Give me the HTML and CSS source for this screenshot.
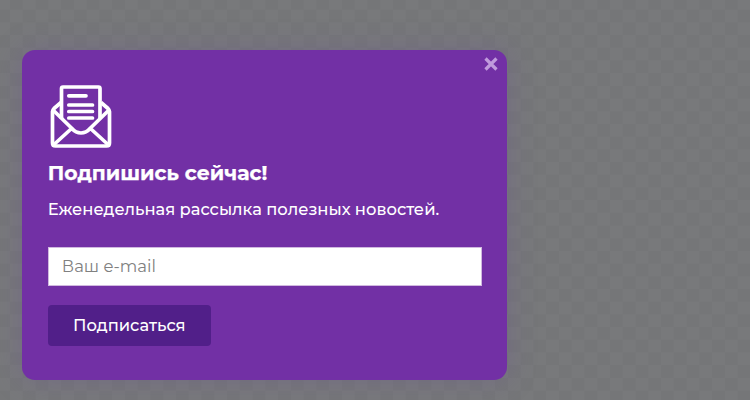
FILE: index.html
```
<!DOCTYPE html>
<html lang="ru">
<head>
<meta charset="utf-8">
<title>Подписка</title>
<link rel="stylesheet" href="styles.css">
</head>
<body>
<main class="popup">
  <button class="close" type="button" aria-label="Закрыть">
    <svg width="16" height="16" viewBox="0 0 16 16"><path d="M2.500 2.500L13.500 13.500M13.500 2.500L2.500 13.500"/></svg>
  </button>
  <svg class="mail" width="64" height="66" viewBox="0 0 64 66">
    <path d="M13.500 36V5.500Q13.500 4 15 4H50.500Q52 4 52 5.500V36"/>
    <path d="M13 19.500L6 25.500Q4.500 27 4.500 28.500V60Q4.500 63 7.500 63H58.500Q61.500 63 61.500 60V28.500Q61.500 27 60 25.500L53 19.500"/>
    <path d="M5 27L24 45.500C29 51.500 37 51.500 42 45.500L61 27M6 61.500L23 46M60 61.500L43 46"/>
    <path class="lines" d="M20.800 12.800H38M20.800 22H44.500M20.800 28.500H44.500M20.800 35H44.500"/>
  </svg>
  <h1 class="title">Подпишись сейчас!</h1>
  <p class="text">Еженедельная рассылка полезных новостей.</p>
  <form class="form">
    <input class="email" type="email" placeholder="Ваш e-mail">
    <button class="submit" type="button">Подписаться</button>
  </form>
</main>
</body>
</html>
```
FILE: styles.css
```
* { box-sizing: border-box; }
body {
  margin: 0;
  height: 400px;
  padding: 49.600px 0 0 21.800px;
  overflow: hidden;
  font-family: Montserrat, Inter, sans-serif;
  background: repeating-conic-gradient(#757678 0 25%, #78797b 0 50%) 10px 9.7px / 25.54px 25.4px;
}
.popup {
  position: relative;
  width: 485.700px;
  height: 330px;
  padding: 33px 26px 0;
  border-radius: 13px;
  background: #7230a5;
  color: #fff;
  box-shadow: 0 0 28px rgba(108, 84, 150, .38);
}
.close {
  position: absolute;
  top: 6.400px;
  right: 8.300px;
  width: 16px;
  height: 16px;
  padding: 0;
  border: 0;
  background: none;
}
.close svg { display: block; }
.close path { stroke: #c09bdc; stroke-width: 3.200; }
.mail { display: block; fill: none; stroke: #fff; stroke-width: 3.700; stroke-linejoin: round; }
.lines { stroke-linecap: round; }
.title {
  margin: 10px 0 0;
  font-size: 20.400px;
  line-height: 28px;
  font-weight: 700;
  white-space: nowrap;
  -webkit-text-stroke: .25px #fff;
}
.text {
  margin: 10px 0 0;
  font-size: 16.350px;
  line-height: 24px;
  font-weight: 500;
  white-space: nowrap;
}
.form {
  display: flex;
  flex-direction: column;
  align-items: flex-start;
  gap: 19px;
  margin-top: 26px;
}
.email {
  width: 434px;
  height: 39px;
  padding: 0 13px 1px;
  border: 1px solid #d0b9df;
  border-radius: 0;
  background: #fff;
  font: 400 16.500px Montserrat, Inter, sans-serif;
}
.email::placeholder { color: #808080; opacity: 1; }
.submit {
  width: 163px;
  height: 41px;
  padding: 0 0 1px;
  border: 0;
  border-radius: 4px;
  background: #511f89;
  color: #fff;
  font: 500 16.350px Montserrat, Inter, sans-serif;
}
```
